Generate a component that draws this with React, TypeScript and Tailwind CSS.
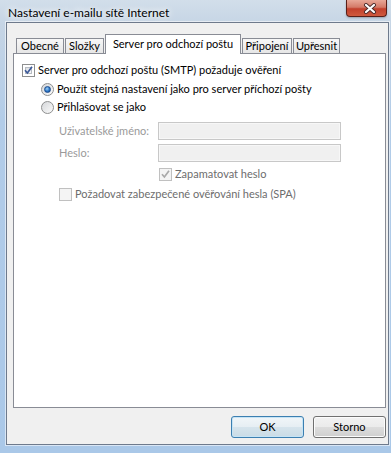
import React from 'react';

function Check({ checked, disabled }: { checked?: boolean; disabled?: boolean }) {
  return (
    <span
      className={
        disabled
          ? 'relative w-[13px] h-[13px] shrink-0 border border-[#c0c0c0] bg-[#f4f4f4]'
          : 'relative w-[13px] h-[13px] shrink-0 border border-[#8e8f8f] bg-white'
      }
    >
      <span
        className={
          disabled
            ? 'absolute inset-[2px] bg-[#f4f4f4]'
            : 'absolute inset-[2px] border border-[#b7bcc3] bg-gradient-to-br from-[#dadde1] to-[#fafafa]'
        }
      />
      {checked && (
        <svg className="absolute inset-0" width="11" height="11" viewBox="0 0 11 11">
          <path
            d="M2 5.2 L4.4 8 L9 1.8"
            fill="none"
            stroke={disabled ? '#a9a9a9' : '#3d5a99'}
            strokeWidth="1.7"
          />
        </svg>
      )}
    </span>
  );
}

function Radio({ checked }: { checked?: boolean }) {
  return (
    <span className="w-[13px] h-[13px] shrink-0 rounded-full border border-[#8e8f8f] bg-gradient-to-br from-[#d5d7da] to-[#fbfbfb] flex items-center justify-center">
      {checked && (
        <span className="w-[7px] h-[7px] rounded-full border border-[#1b4b8e] bg-[radial-gradient(circle_at_40%_35%,#9fd0f5,#2d78c8_55%,#0c3d82)]" />
      )}
    </span>
  );
}

function Tab({ label, width, active }: { label: string; width: string; active?: boolean }) {
  if (active) {
    return (
      <div
        className={`${width} relative z-10 -mb-px h-[20px] ml-px border border-b-0 border-[#898c95] bg-white flex items-start justify-center pt-[2px]`}
      >
        {label}
      </div>
    );
  }
  return (
    <div
      className={`${width} h-[15px] ml-px border border-b-0 border-[#898c95] bg-gradient-to-b from-[#f7f7f7] to-[#e6e6e6] flex items-center justify-center`}
    >
      {label}
    </div>
  );
}

export default function App() {
  return (
    <div
      className="w-[391px] h-[453px] overflow-hidden flex flex-col bg-[linear-gradient(180deg,#d2deea_0px,#c6d5e5_24px,#b2cce8_120px,#aac8e8_100%)] text-[11px] leading-[14px] text-black whitespace-nowrap"
      style={{ fontFamily: 'Lato, "Liberation Sans", Arial, sans-serif' }}
    >
      {/* title bar */}
      <div className="h-[22px] shrink-0 flex items-start">
        <span className="pl-2 pt-[5px] text-[12px] leading-[15px] [text-shadow:0_0_6px_#fff,0_0_10px_#fff]">
          Nastavení e-mailu sítě Internet
        </span>
        <div className="ml-auto mr-[4px] w-[41px] h-[17px] rounded-b-[4px] border border-t-0 border-[#5a1f18] bg-[linear-gradient(180deg,#e8a898_0%,#d47a68_45%,#c2402c_55%,#cf5a3e_100%)] shadow-[0_1px_2px_rgba(0,0,0,0.25)] flex items-center justify-center pl-[6px]">
          <svg width="14" height="11" viewBox="0 0 14 11">
            <path d="M3 2 L11 9 M11 2 L3 9" stroke="#4a2a2a" strokeWidth="4" strokeLinecap="round" />
            <path d="M3 2 L11 9 M11 2 L3 9" stroke="#ffffff" strokeWidth="2.2" strokeLinecap="round" />
          </svg>
        </div>
      </div>

      {/* client area */}
      <div className="ml-[6px] w-[383px] h-[423px] shrink-0 border border-[#6e7a8c] bg-[#f0f0f0] shadow-[0_0_0_1px_rgba(255,255,255,0.55)] pl-[6px] pt-[11px] flex flex-col">
        <div className="flex items-end h-[19px] ml-[2px]">
          <Tab label="Obecné" width="w-[48px]" />
          <Tab label="Složky" width="w-[39px]" />
          <Tab label="Server pro odchozí poštu" width="w-[136px]" active />
          <Tab label="Připojení" width="w-[50px]" />
          <Tab label="Upřesnit" width="w-[47px]" />
        </div>

        <div className="w-[373px] h-[355px] border border-[#898c95] bg-white pl-[8px] flex flex-col">
          <div className="mt-[7px] h-[18px] flex items-center">
            <Check checked />
            <span className="ml-[3px]">Server pro odchozí poštu (SMTP) požaduje ověření</span>
          </div>
          <div className="mt-[1px] h-[18px] flex items-center ml-[19px]">
            <Radio checked />
            <span className="ml-[3px]">Použít stejná nastavení jako pro server příchozí pošty</span>
          </div>
          <div className="h-[18px] flex items-center ml-[19px]">
            <Radio />
            <span className="ml-[3px]">Přihlašovat se jako</span>
          </div>
          <div className="mt-[6px] h-[18px] flex items-center ml-[37px]">
            <span className="w-[99px] shrink-0 text-[#9a9a9a]">Uživatelské jméno:</span>
            <span className="w-[183px] h-[18px] shrink-0 border border-[#c8c8c8] bg-[#f0f0f0] shadow-[inset_0_0_0_1px_#f7f7f7]" />
          </div>
          <div className="mt-[4px] h-[18px] flex items-center ml-[37px]">
            <span className="w-[99px] shrink-0 text-[#9a9a9a]">Heslo:</span>
            <span className="w-[183px] h-[18px] shrink-0 border border-[#c8c8c8] bg-[#f0f0f0] shadow-[inset_0_0_0_1px_#f7f7f7]" />
          </div>
          <div className="mt-[3px] h-[18px] flex items-center ml-[137px]">
            <Check checked disabled />
            <span className="ml-[3px] text-[#6d6d6d]">Zapamatovat heslo</span>
          </div>
          <div className="mt-[2px] h-[18px] flex items-center ml-[37px]">
            <Check disabled />
            <span className="ml-[3px] text-[#6d6d6d]">Požadovat zabezpečené ověřování hesla (SPA)</span>
          </div>
        </div>

        <div className="mt-[8px] flex justify-end gap-[9px] pr-[2px]">
          <button className="w-[73px] h-[22px] rounded-[3px] border border-[#3c7fb1] bg-[linear-gradient(#f1f6f9,#e6eef3_50%,#d6e4ec_50%,#c9dbe6)] shadow-[inset_0_0_0_1px_#c6e4f5]">
            OK
          </button>
          <button className="w-[73px] h-[22px] rounded-[3px] border border-[#707070] bg-[linear-gradient(#f2f2f2,#ebebeb_50%,#dddddd_50%,#cfcfcf)] shadow-[inset_0_0_0_1px_#fcfcfc]">
            Storno
          </button>
        </div>
      </div>
    </div>
  );
}
